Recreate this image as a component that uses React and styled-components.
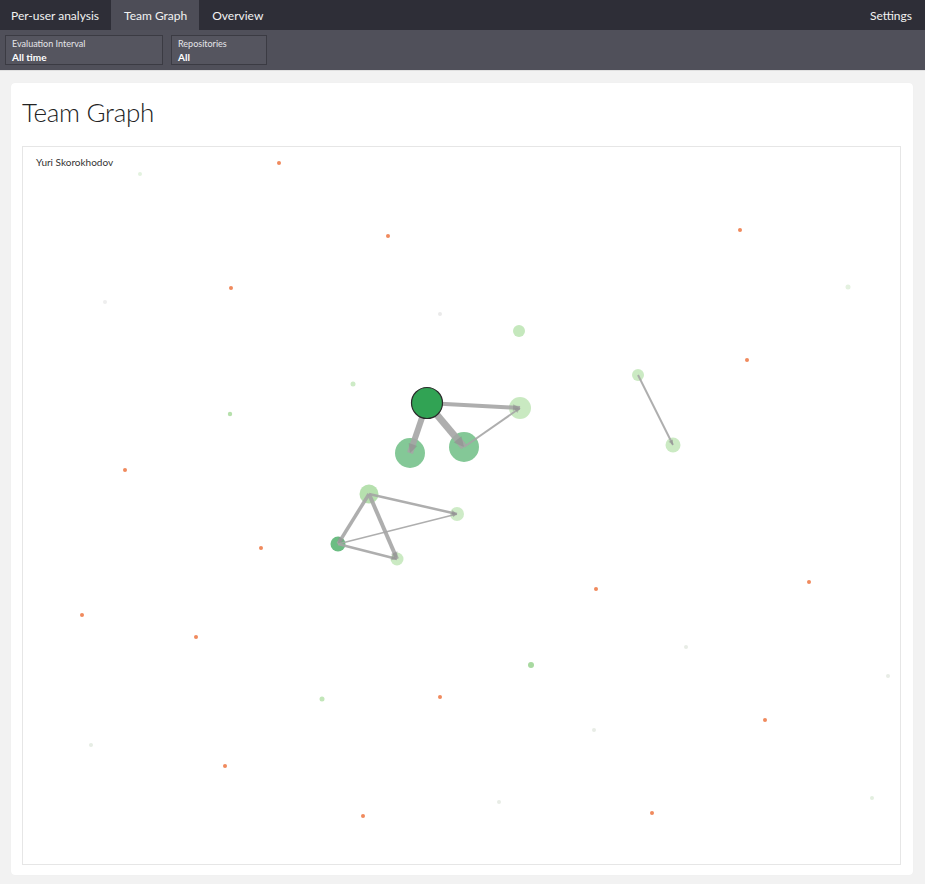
import React from "react";
import styled, { createGlobalStyle } from "styled-components";

const Global = createGlobalStyle`
  html, body { margin: 0; padding: 0; background: #f2f2f2; }
  body { font-family: Lato, "Open Sans", "Liberation Sans", sans-serif; }
  * { box-sizing: border-box; }
`;

const Page = styled.div`
  display: flex;
  flex-direction: column;
  min-height: 884px;
  background: #f2f2f2;
`;

const TopBar = styled.nav`
  display: flex;
  align-items: stretch;
  height: 30px;
  background: #2e2e37;
  color: #f2f2f2;
  font-size: 12px;
`;

const Tab = styled.div`
  display: flex;
  align-items: center;
  padding: 0 ${(p) => (p.$right ? 13 : 12)}px 0 ${(p) => (p.$first ? 11 : 13)}px;
  background: ${(p) => (p.$active ? "#4d4d57" : "transparent")};
  white-space: nowrap;
`;

const Spacer = styled.div`
  flex: 1;
`;

const FilterBar = styled.div`
  display: flex;
  gap: 8px;
  height: 41px;
  padding: 5px 5px 5px;
  background: #50505a;
  border-bottom: 1px solid #e0e0e0;
`;

const Filter = styled.div`
  display: flex;
  flex-direction: column;
  justify-content: center;
  gap: 2px;
  width: ${(p) => p.$w}px;
  padding: 0 6px;
  background: #55555f;
  border: 1px solid #3b3b43;
  color: #fff;
`;

const FilterLabel = styled.span`
  font-size: 9px;
  line-height: 11px;
  color: #e6e6ea;
`;

const FilterValue = styled.span`
  font-size: 10px;
  line-height: 12px;
  font-weight: 700;
`;

const Main = styled.main`
  padding: 12px 12px 8px 11px;
`;

const Card = styled.section`
  background: #fff;
  border-radius: 4px;
  padding: 12px 12px 10px 11px;
  box-shadow: 0 0 1px rgba(0, 0, 0, 0.05);
`;

const Title = styled.h1`
  margin: 0 0 17px;
  font-weight: 300;
  font-size: 26px;
  letter-spacing: -0.3px;
  line-height: 34px;
  color: #222;
`;

const GraphBox = styled.div`
  position: relative;
  height: 719px;
  border: 1px solid #e6e6e6;
`;

const GraphLabel = styled.div`
  position: absolute;
  left: 13px;
  top: 9px;
  font-size: 10px;
  color: #333;
`;

const Svg = styled.svg`
  display: block;
  width: 100%;
  height: 100%;
`;

const OX = 23;
const OY = 147;

const orange = [
  [279, 163], [388, 236], [231, 288], [740, 230], [747, 360], [125, 470],
  [261, 548], [596, 589], [809, 582], [82, 615], [196, 637], [440, 697],
  [765, 720], [225, 766], [363, 816], [652, 813],
];

const faint = [
  [140, 174, 2, "#e3f2df"], [105, 302, 2, "#eeeeee"], [440, 314, 2, "#eaeaea"],
  [848, 287, 2.5, "#e4f1e0"], [686, 647, 2, "#e8ece6"], [888, 676, 2, "#e8ece6"],
  [91, 745, 2, "#e6ede4"], [594, 730, 2, "#e8ece6"], [499, 802, 2, "#e8ece6"],
  [872, 798, 2, "#e3efe0"],
  [353, 384, 2.5, "#cdebc6"], [230, 414, 2.2, "#b6e0ac"], [322, 699, 2.5, "#c2e6b9"],
  [531, 665, 3, "#a8d9a0"], [519, 331, 6, "#c5e8bd"],
];

const edges = [
  [427, 403, 520, 408, 4],
  [427, 403, 410, 453, 6],
  [427, 403, 464, 447, 7],
  [464, 447, 520, 408, 2],
  [369, 494, 338, 544, 3.5],
  [369, 494, 397, 559, 4],
  [369, 494, 457, 514, 2.5],
  [338, 544, 457, 514, 1.5],
  [338, 544, 397, 559, 2.5],
  [638, 375, 673, 445, 2],
];

const nodes = [
  [520, 408, 11, "#bfe5b6", 0.85],
  [410, 453, 15, "#6fbe85", 0.85],
  [464, 447, 15, "#6fbe85", 0.85],
  [369, 494, 9.5, "#a9dba0", 0.85],
  [457, 514, 7, "#c5e8bd", 0.85],
  [338, 544, 7.5, "#5cb676", 0.9],
  [397, 559, 6.5, "#c2e6b9", 0.85],
  [638, 375, 6, "#c2e6b9", 0.85],
  [673, 445, 7.5, "#c2e6b9", 0.85],
];

function Arrow({ x1, y1, x2, y2, w }) {
  const dx = x2 - x1;
  const dy = y2 - y1;
  const len = Math.hypot(dx, dy);
  const ux = dx / len;
  const uy = dy / len;
  const s = 3 + w;
  const bx = x2 - ux * s;
  const by = y2 - uy * s;
  return (
    <polygon
      points={`${x2},${y2} ${bx - uy * s * 0.5},${by + ux * s * 0.5} ${bx + uy * s * 0.5},${by - ux * s * 0.5}`}
      fill="#8a8a8a"
      opacity="0.5"
    />
  );
}

function Graph() {
  return (
    <Svg viewBox="0 0 877 717" preserveAspectRatio="xMinYMin meet">
      <g transform={`translate(${-OX},${-OY})`}>
        {faint.map(([x, y, r, c], i) => (
          <circle key={"f" + i} cx={x} cy={y} r={r} fill={c} />
        ))}
        {orange.map(([x, y], i) => (
          <circle key={"o" + i} cx={x} cy={y} r={2} fill="#f08a5d" />
        ))}
        {nodes.map(([x, y, r, c, o], i) => (
          <circle key={"n" + i} cx={x} cy={y} r={r} fill={c} opacity={o} />
        ))}
        {edges.map(([x1, y1, x2, y2, w], i) => (
          <g key={"e" + i}>
            <line x1={x1} y1={y1} x2={x2} y2={y2} stroke="#a6a6a6" strokeWidth={w} opacity="0.9" />
            <Arrow x1={x1} y1={y1} x2={x2} y2={y2} w={w} />
          </g>
        ))}
        <circle cx={427} cy={403} r={15.5} fill="#31a354" stroke="#2b2b2b" strokeWidth="1.2" />
      </g>
    </Svg>
  );
}

export default function App() {
  return (
    <Page>
      <Global />
      <TopBar>
        <Tab $first>Per-user analysis</Tab>
        <Tab $active>Team Graph</Tab>
        <Tab>Overview</Tab>
        <Spacer />
        <Tab $right>Settings</Tab>
      </TopBar>
      <FilterBar>
        <Filter $w={158}>
          <FilterLabel>Evaluation Interval</FilterLabel>
          <FilterValue>All time</FilterValue>
        </Filter>
        <Filter $w={96}>
          <FilterLabel>Repositories</FilterLabel>
          <FilterValue>All</FilterValue>
        </Filter>
      </FilterBar>
      <Main>
        <Card>
          <Title>Team Graph</Title>
          <GraphBox>
            <GraphLabel>Yuri Skorokhodov</GraphLabel>
            <Graph />
          </GraphBox>
        </Card>
      </Main>
    </Page>
  );
}
